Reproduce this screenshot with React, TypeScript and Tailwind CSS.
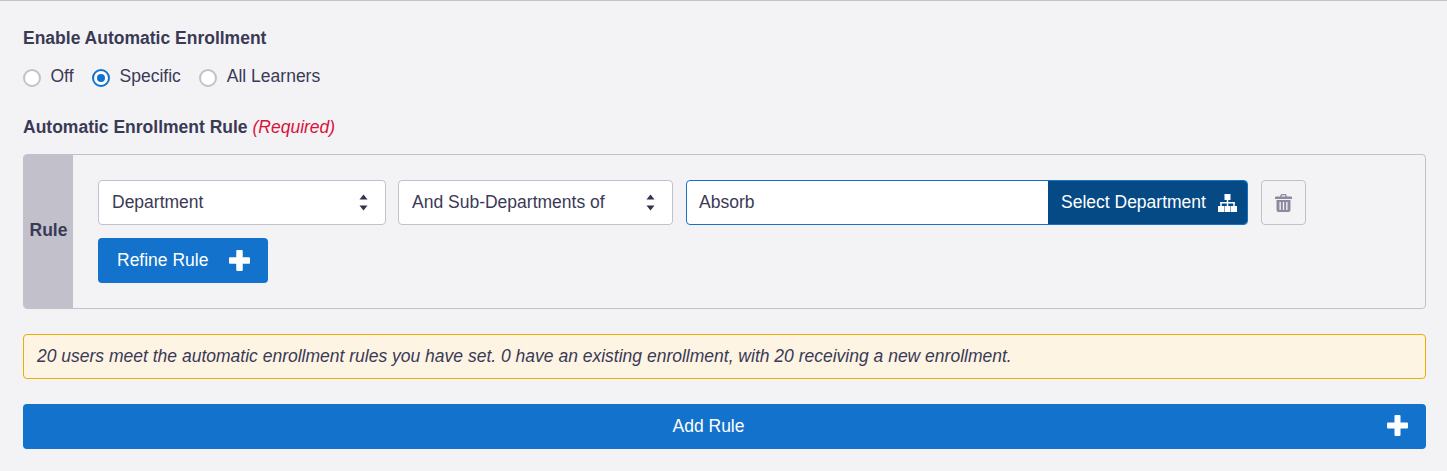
import React from "react";

function Radio({ label, checked }: { label: string; checked?: boolean }) {
  return (
    <label className="flex items-center">
      {checked ? (
        <span className="w-[18px] h-[18px] rounded-full border-2 border-[#1272cc] bg-white flex items-center justify-center mt-[3px]">
          <span className="w-2 h-2 rounded-full bg-[#1272cc]" />
        </span>
      ) : (
        <span className="w-[18px] h-[18px] rounded-full border-2 border-[#c1c0cb] bg-white mt-[3px]" />
      )}
      <span className="ml-[9.5px]">{label}</span>
    </label>
  );
}

function Sel({ label, w }: { label: string; w: string }) {
  return (
    <div className={`${w} h-[45px] bg-white border border-[#c1c0cb] rounded flex items-center justify-between pl-[13px] pr-[17px]`}>
      <span className="-mt-px">{label}</span>
      <svg width="9" height="17" viewBox="0 0 9 17" className="fill-[#33334d]">
        <path d="M4.5 0.5 L8.5 5.5 L0.5 5.5 Z" />
        <path d="M0.5 11.5 L8.5 11.5 L4.5 16.5 Z" />
      </svg>
    </div>
  );
}

function Plus({ size, bar }: { size: number; bar: number }) {
  const o = (size - bar) / 2;
  return (
    <svg width={size} height={size} viewBox={`0 0 ${size} ${size}`} className="fill-white shrink-0">
      <rect x={o} y={0} width={bar} height={size} rx="1" />
      <rect x={0} y={o} width={size} height={bar} rx="1" />
    </svg>
  );
}

function Sitemap() {
  return (
    <svg width="19" height="18" viewBox="0 0 19 18" className="fill-white shrink-0">
      <rect x="6.5" y="0" width="6" height="6" />
      <rect x="0" y="12" width="6" height="6" />
      <rect x="6.5" y="12" width="6" height="6" />
      <rect x="13" y="12" width="6" height="6" />
      <rect x="8.75" y="6" width="1.5" height="6" />
      <rect x="2.25" y="8" width="14.5" height="1.5" />
      <rect x="2.25" y="8" width="1.5" height="4" />
      <rect x="15.25" y="8" width="1.5" height="4" />
    </svg>
  );
}

function Trash() {
  return (
    <svg width="17" height="18" viewBox="0 0 17 18" className="fill-[#8c8a9e]">
      <path fillRule="evenodd" d="M5 2.5 L5.8 0.5 Q6 0 6.6 0 H10.4 Q11 0 11.2 0.5 L12 2.5 H16 Q17 2.5 17 3.5 V5 H0 V3.5 Q0 2.5 1 2.5 Z M6.5 2.5 H10.5 L10 1.2 H7 Z" />
      <path fillRule="evenodd" d="M1.5 6 H15.5 V16 Q15.5 18 13.5 18 H3.5 Q1.5 18 1.5 16 Z M4.5 8 V16 H5.8 V8 Z M7.85 8 V16 H9.15 V8 Z M11.2 8 V16 H12.5 V8 Z" />
    </svg>
  );
}

export default function App() {
  return (
    <div className="w-[1447px] h-[471px] overflow-hidden bg-[#f3f3f6] border-t border-[#c1c0cb] pl-[23px] pr-[21px] text-[#3a3a55] text-[17.5px] leading-[24px] font-['Liberation_Sans',Arial,sans-serif]">
      <div className="font-bold mt-[25px]">Enable Automatic Enrollment</div>
      <div className="flex gap-[18.5px] mt-[14px]">
        <Radio label="Off" />
        <Radio label="Specific" checked />
        <Radio label="All Learners" />
      </div>
      <div className="mt-[27px]">
        <span className="font-bold">Automatic Enrollment Rule</span>{" "}
        <span className="italic text-[#d9123a]">(Required)</span>
      </div>
      <div className="mt-[15px] h-[155px] flex border border-[#c1c0cb] rounded overflow-hidden">
        <div className="w-[50px] -ml-px bg-[#c1c0cb] flex items-center justify-center font-bold shrink-0 pl-[1px] pb-[3px]">Rule</div>
        <div className="pl-[25px] pt-[25px]">
          <div className="flex">
            <Sel label="Department" w="w-[288px]" />
            <Sel label="And Sub-Departments of" w="w-[275px] ml-[12px]" />
            <div className="w-[562px] h-[45px] ml-[13px] flex rounded overflow-hidden border border-[#1272cc] bg-white">
              <div className="flex-1 flex items-center pl-3 -mt-px">Absorb</div>
              <div className="w-[200px] -my-px -mr-px bg-[#054a85] text-white flex items-center pl-[13px] gap-3">
                <span className="-mt-px">Select Department</span>
                <Sitemap />
              </div>
            </div>
            <div className="w-[45px] h-[45px] ml-[13px] rounded border border-[#c1c0cb] flex items-center justify-center">
              <Trash />
            </div>
          </div>
          <div className="mt-[13px] w-[170px] h-[45px] bg-[#1272cc] rounded text-white flex items-center pl-[19px] gap-[21px]">
            <span className="-mt-[2px]">Refine Rule</span>
            <Plus size={21} bar={6.5} />
          </div>
        </div>
      </div>
      <div className="mt-[25px] h-[45px] bg-[#fdf4e4] border border-[#e6b000] rounded flex items-center pl-[13px] italic">
        <span className="-mt-px">20 users meet the automatic enrollment rules you have set. 0 have an existing enrollment, with 20 receiving a new enrollment.</span>
      </div>
      <div className="mt-[25px] h-[45px] bg-[#1272cc] rounded text-white flex items-center justify-center relative">
        <span className="-ml-[32px] -mt-px">Add Rule</span>
        <span className="absolute right-[18px] top-[11px]"><Plus size={21} bar={6} /></span>
      </div>
    </div>
  );
}
